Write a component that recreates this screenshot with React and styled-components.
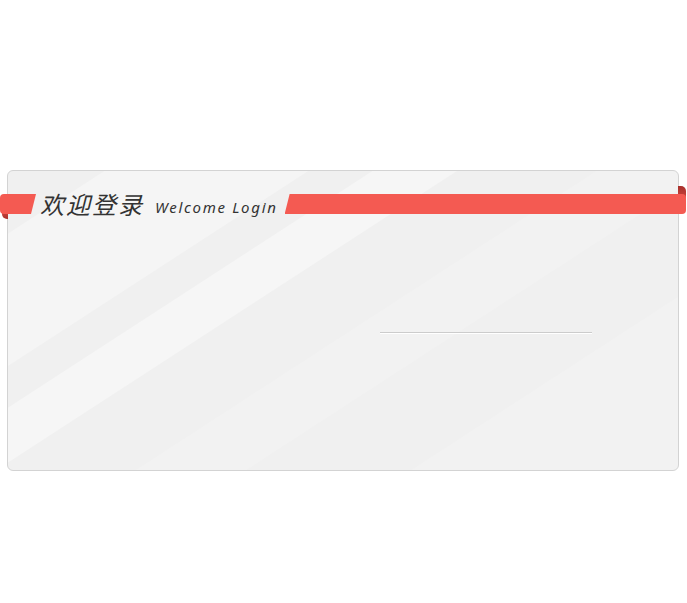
import React from 'react';
import styled, { createGlobalStyle } from 'styled-components';

const GlobalStyle = createGlobalStyle`
  html, body {
    margin: 0;
    padding: 0;
    background: #ffffff;
  }
  body {
    font-family: "Noto Sans", "Noto Sans CJK SC", sans-serif;
  }
`;

const RIBBON = '#f45a52';
const CURL = '#a8302b';

const Page = styled.div`
  padding: 170px 0 0 7px;
`;

const Card = styled.div`
  box-sizing: border-box;
  width: 672px;
  height: 301px;
  border: 1px solid #d3d3d3;
  border-radius: 6px;
  background: linear-gradient(
    147deg,
    #f0f0f0 0px,
    #f0f0f0 52px,
    #f5f5f5 53px,
    #f5f5f5 163px,
    #f0f0f0 164px,
    #f0f0f0 198px,
    #f6f6f6 199px,
    #f6f6f6 244px,
    #f0f0f0 245px,
    #f0f0f0 320px,
    #f2f2f2 321px,
    #f2f2f2 380px,
    #f0f0f0 381px,
    #f0f0f0 470px,
    #f2f2f2 471px,
    #f2f2f2 100%
  );
  display: flex;
  flex-direction: column;
`;

const Header = styled.div`
  display: flex;
  align-items: center;
  height: 20px;
  margin: 23px -8px 0 -8px;
`;

const LeftTab = styled.div`
  position: relative;
  width: 36px;
  height: 20px;
  flex: none;

  &::after {
    content: '';
    position: absolute;
    left: 2px;
    top: 16px;
    width: 6px;
    height: 9px;
    border-radius: 0 0 0 5px;
    background: linear-gradient(180deg, #d44a43, ${CURL});
    z-index: 0;
  }
`;

const LeftSlant = styled.div`
  position: relative;
  z-index: 1;
  height: 100%;
  background: ${RIBBON};
  border-radius: 4px 0 0 4px;
  clip-path: polygon(0 0, 100% 0, calc(100% - 5px) 100%, 0 100%);
`;

const Title = styled.h1`
  margin: 0 0 0 4px;
  font-family: "Noto Sans CJK SC", "Noto Sans", sans-serif;
  font-size: 24px;
  font-weight: 400;
  font-style: italic;
  letter-spacing: 2px;
  line-height: 20px;
  color: #333333;
  white-space: nowrap;
`;

const SubTitle = styled.span`
  margin-left: 11px;
  padding-top: 5px;
  font-family: "Noto Sans", sans-serif;
  font-size: 15px;
  font-style: italic;
  letter-spacing: 1.7px;
  line-height: 20px;
  color: #333333;
  white-space: nowrap;
`;

const RightTab = styled.div`
  position: relative;
  flex: 1;
  height: 20px;
  margin-left: 7px;

  &::before {
    content: '';
    position: absolute;
    right: 0;
    top: -8px;
    width: 8px;
    height: 12px;
    border-radius: 0 5px 0 0;
    background: linear-gradient(180deg, ${CURL}, #c9433c);
    z-index: 0;
  }
`;

const RightBand = styled.div`
  position: relative;
  z-index: 1;
  height: 100%;
  background: ${RIBBON};
  border-radius: 0 4px 4px 0;
  clip-path: polygon(5px 0, 100% 0, 100% 100%, 0 100%);
`;

const Body = styled.div`
  flex: 1;
  display: flex;
  justify-content: flex-end;
  padding: 0 86px 0 0;
`;

const FormColumn = styled.div`
  width: 212px;
  padding-top: 118px;
`;

const Divider = styled.div`
  height: 1px;
  background: #cccccc;
  border-bottom: 1px solid #ffffff;
`;

export default function App() {
  return (
    <>
      <GlobalStyle />
      <Page>
        <Card>
          <Header>
            <LeftTab>
              <LeftSlant />
            </LeftTab>
            <Title>欢迎登录</Title>
            <SubTitle>Welcome Login</SubTitle>
            <RightTab>
              <RightBand />
            </RightTab>
          </Header>
          <Body>
            <FormColumn>
              <Divider />
            </FormColumn>
          </Body>
        </Card>
      </Page>
    </>
  );
}
